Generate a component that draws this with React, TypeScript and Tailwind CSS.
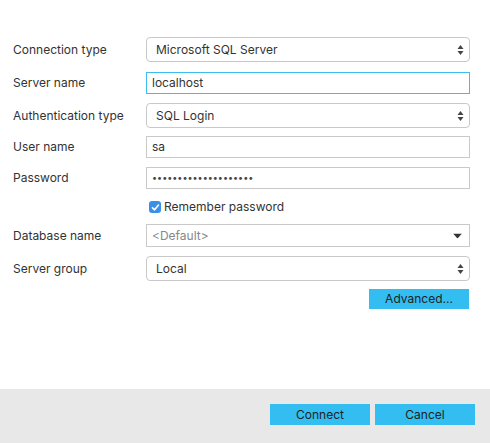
import { ReactNode } from "react";

function UpDown() {
  return (
    <svg width="7" height="11" viewBox="0 0 7 11" className="absolute right-[5px] top-1/2 -translate-y-1/2">
      <path d="M3.5 0.5 L6.5 4.5 L0.5 4.5 Z" fill="#444" />
      <path d="M3.5 10.5 L6.5 6.5 L0.5 6.5 Z" fill="#444" />
    </svg>
  );
}

function Row({ label, children, className }: { label?: string; children: ReactNode; className?: string }) {
  return (
    <div className={`flex items-center ${className ?? ""}`}>
      <div className="w-[133px] shrink-0 text-[12px] text-[#333]">{label}</div>
      <div className="w-[324px]">{children}</div>
    </div>
  );
}

function Select({ value }: { value: string }) {
  return (
    <div className="relative h-[25px] rounded-[4px] border border-[#c9c9c9] bg-white flex items-center pl-[9px] text-[12px] text-[#333]">
      {value}
      <UpDown />
    </div>
  );
}

function Input({ value, focused, children }: { value?: string; focused?: boolean; children?: ReactNode }) {
  return (
    <div
      className={`h-[22px] border bg-white flex items-center pl-[5px] text-[12px] text-[#333] ${
        focused ? "border-[#3cbdee]" : "border-[#c9c9c9]"
      }`}
    >
      {value}
      {children}
    </div>
  );
}

export default function App() {
  return (
    <div className="w-[490px] h-[443px] flex flex-col bg-white" style={{ fontFamily: "Inter, 'Liberation Sans', sans-serif" }}>
      <div className="flex-1 pl-[13px] pt-[37px] flex flex-col">
        <Row label="Connection type">
          <Select value="Microsoft SQL Server" />
        </Row>
        <Row label="Server name" className="mt-[10px]">
          <Input value="localhost" focused />
        </Row>
        <Row label="Authentication type" className="mt-[9px]">
          <Select value="SQL Login" />
        </Row>
        <Row label="User name" className="mt-[8px]">
          <Input value="sa" />
        </Row>
        <Row label="Password" className="mt-[9px]">
          <Input>
            <span className="text-[9px] text-[#444]">••••••••••••••••••••</span>
          </Input>
        </Row>
        <Row className="mt-[7px] h-[22px]">
          <div className="flex items-center pl-[3px] text-[12px] text-[#333]">
            <div className="w-[12px] h-[12px] rounded-[3px] bg-[#3b8fe9] flex items-center justify-center mr-[3px]">
              <svg width="9" height="9" viewBox="0 0 9 9">
                <path d="M1.5 4.8 L3.6 6.8 L7.5 2" stroke="white" strokeWidth="1.6" fill="none" strokeLinecap="round" strokeLinejoin="round" />
              </svg>
            </div>
            Remember password
          </div>
        </Row>
        <Row label="Database name" className="mt-[6px]">
          <div className="relative h-[23px] border border-[#c9c9c9] bg-white flex items-center pl-[5px] text-[12px] text-[#888]">
            &lt;Default&gt;
            <svg width="9" height="5" viewBox="0 0 9 5" className="absolute right-[7px] top-1/2 -translate-y-1/2">
              <path d="M0 0 L9 0 L4.5 5 Z" fill="#333" />
            </svg>
          </div>
        </Row>
        <Row label="Server group" className="mt-[9px]">
          <Select value="Local" />
        </Row>
        <div className="mt-[8px] w-[456px] flex justify-end">
          <button className="w-[100px] h-[20px] bg-[#33bdf0] text-[12px] text-[#222]">Advanced...</button>
        </div>
      </div>
      <div className="h-[54px] bg-[#e8e8e8] flex justify-end items-start pt-[15px] pr-[15px] gap-[5px]">
        <button className="w-[100px] h-[21px] bg-[#33bdf0] text-[12px] text-[#222]">Connect</button>
        <button className="w-[100px] h-[21px] bg-[#33bdf0] text-[12px] text-[#222]">Cancel</button>
      </div>
    </div>
  );
}
